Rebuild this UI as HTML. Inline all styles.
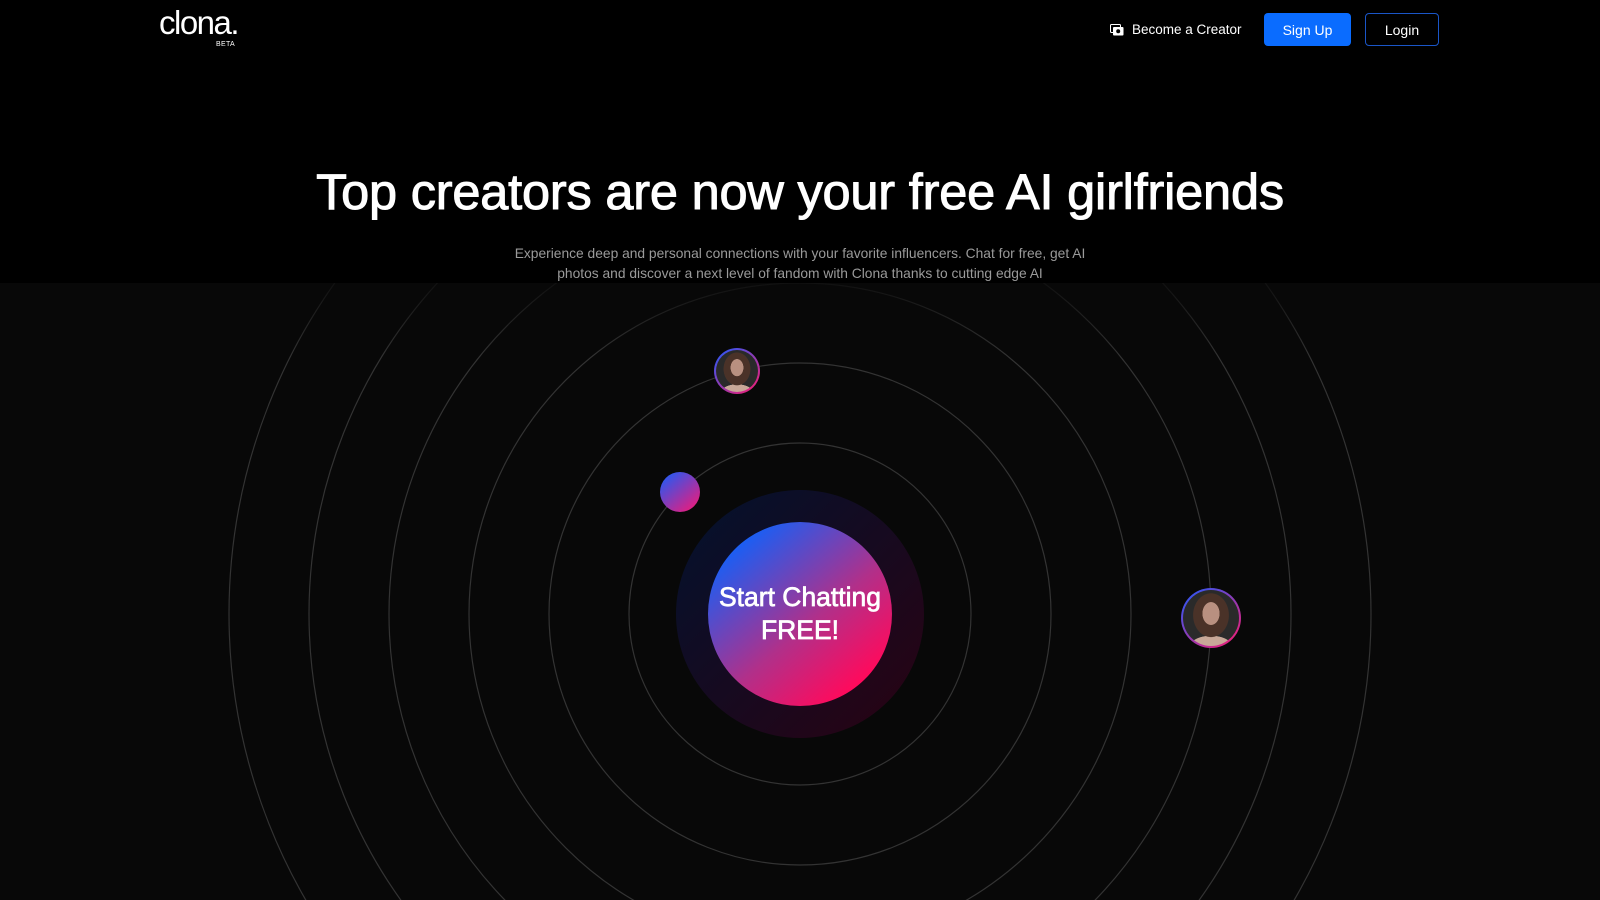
<!DOCTYPE html>
<html><head><meta charset="utf-8"><style>
*{margin:0;padding:0;box-sizing:border-box}
html,body{width:1600px;height:900px;overflow:hidden}
body{background:#000;position:relative;font-family:"Liberation Sans",Arial,sans-serif;color:#fff}
.logo{position:absolute;left:159px;top:4px;font-size:33px;letter-spacing:-1.5px;font-weight:400}
.beta{position:absolute;left:216px;top:41px;font-size:7px;letter-spacing:.3px}
.creator{position:absolute;left:1110px;top:22px;font-size:13.5px;display:flex;align-items:center;gap:8px}
.btn{position:absolute;top:13px;height:33px;border-radius:4px;font-size:14px;display:flex;align-items:center;justify-content:center}
.signup{left:1264px;width:87px;background:#0a6cff}
.login{left:1365px;width:74px;border:1px solid #1a56c8}
h1{position:absolute;top:162px;left:0;width:1600px;text-align:center;font-size:50.5px;font-weight:400;letter-spacing:-0.2px;-webkit-text-stroke:1px #fff}
.sub{position:absolute;top:244px;left:510px;width:580px;text-align:center;font-size:13.8px;line-height:20px;color:#9a9a9a}
.band{position:absolute;top:283px;left:0;width:1600px;height:617px;background:#080808;overflow:hidden}
svg{position:absolute;left:0;top:0}
.cta{position:absolute;left:708px;top:239px;width:184px;height:184px;border-radius:50%;background:linear-gradient(140deg,#0a63ff 10%,#b0308a 55%,#ff0a5c 85%);display:flex;align-items:center;justify-content:center;text-align:center;font-size:26.5px;line-height:33px;font-weight:400;-webkit-text-stroke:.7px #fff}
.ball{position:absolute;border-radius:50%;background:linear-gradient(140deg,#1060ff,#ff1570)}
.av{position:absolute;border-radius:50%;background:linear-gradient(140deg,#1e5cff,#ff1a6c);padding:2px}
.av div{width:100%;height:100%;border-radius:50%;background:radial-gradient(ellipse 30% 40% at 50% 42%,#b89080 0 50%,transparent 52%),radial-gradient(ellipse 45% 55% at 50% 45%,#4a3228 0 70%,transparent 72%),radial-gradient(ellipse 60% 30% at 50% 100%,#c8a898 0 60%,transparent 62%),#2a2a2a}
</style></head><body>
<div class="logo">clona.</div><div class="beta">BETA</div>
<div class="creator"><svg style="position:static" width="14" height="12" viewBox="0 0 14 12"><rect x="0.5" y="0.5" width="10" height="8" rx="1" fill="none" stroke="#fff"/><rect x="3" y="3" width="10.5" height="8.5" rx="1" fill="#fff"/><circle cx="8.2" cy="7.2" r="2" fill="#000"/></svg>Become a Creator</div>
<div class="btn signup">Sign Up</div>
<div class="btn login">Login</div>
<h1>Top creators are now your free AI girlfriends</h1>
<div class="sub">Experience deep and personal connections with your favorite influencers. Chat for free, get AI<br>photos and discover a next level of fandom with Clona thanks to cutting edge AI</div>
<div class="band">
<svg width="1600" height="617">
<defs><linearGradient id="gl" x1="0" y1="0" x2="1" y2="1"><stop offset="0" stop-color="#02122e"/><stop offset="1" stop-color="#2a0212"/></linearGradient>
<linearGradient id="fade" x1="0" y1="0" x2="0" y2="1"><stop offset="0" stop-color="#080808" stop-opacity="0.8"/><stop offset="0.12" stop-color="#080808" stop-opacity="0"/></linearGradient></defs>
<g fill="none" stroke="#333" stroke-width="1.2">
<circle cx="800" cy="331" r="171"/><circle cx="800" cy="331" r="251"/><circle cx="800" cy="331" r="331"/><circle cx="800" cy="331" r="411"/><circle cx="800" cy="331" r="491"/><circle cx="800" cy="331" r="571"/></g>
<rect x="0" y="0" width="1600" height="617" fill="url(#fade)"/>
<circle cx="800" cy="331" r="124" fill="url(#gl)"/>
</svg>
<div class="cta">Start Chatting<br>FREE!</div>
<div class="ball" style="left:660px;top:189px;width:40px;height:40px"></div>
<div class="av" style="left:714px;top:65px;width:46px;height:46px"><div></div></div>
<div class="av" style="left:1181px;top:305px;width:60px;height:60px"><div></div></div>
</div>
</body></html>
